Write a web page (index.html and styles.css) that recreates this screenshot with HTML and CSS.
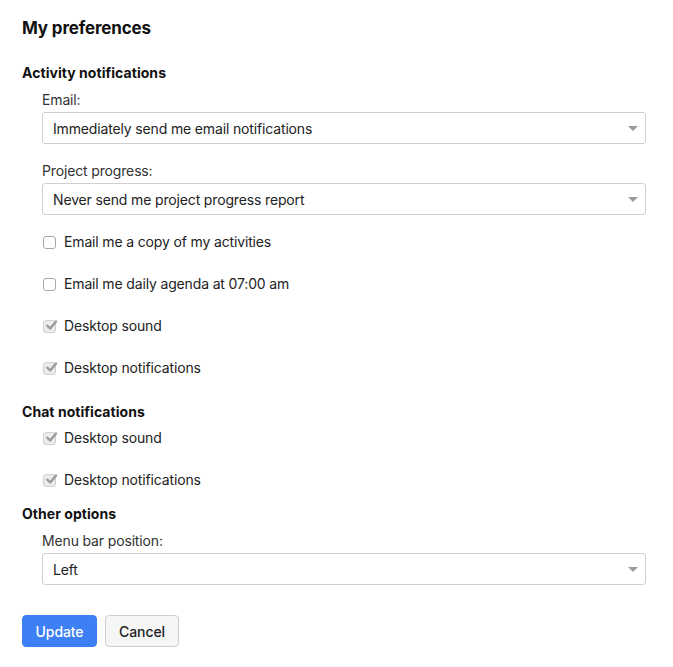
FILE: index.html
```html
<!DOCTYPE html>
<html>
<head>
<meta charset="utf-8">
<link rel="stylesheet" href="styles.css">
</head>
<body>
<div class="page">
  <h1 class="title">My preferences</h1>

  <h2 class="section">Activity notifications</h2>
  <div class="group">
    <div class="label">Email:</div>
    <div class="select"><span>Immediately send me email notifications</span><span class="arrow"></span></div>
    <div class="label label-next">Project progress:</div>
    <div class="select"><span>Never send me project progress report</span><span class="arrow"></span></div>
    <div class="checks first">
      <label class="check"><span class="box"></span>Email me a copy of my activities</label>
      <label class="check"><span class="box"></span>Email me daily agenda at 07:00 am</label>
      <label class="check"><span class="box checked"><svg viewBox="0 0 14 14"><path d="M3 7.2 L5.8 9.8 L11.2 3.2" fill="none" stroke="#9a9a9a" stroke-width="2.2" stroke-linecap="round" stroke-linejoin="round"/></svg></span>Desktop sound</label>
      <label class="check"><span class="box checked"><svg viewBox="0 0 14 14"><path d="M3 7.2 L5.8 9.8 L11.2 3.2" fill="none" stroke="#9a9a9a" stroke-width="2.2" stroke-linecap="round" stroke-linejoin="round"/></svg></span>Desktop notifications</label>
    </div>
  </div>

  <h2 class="section section-chat">Chat notifications</h2>
  <div class="group">
    <div class="checks">
      <label class="check"><span class="box checked"><svg viewBox="0 0 14 14"><path d="M3 7.2 L5.8 9.8 L11.2 3.2" fill="none" stroke="#9a9a9a" stroke-width="2.2" stroke-linecap="round" stroke-linejoin="round"/></svg></span>Desktop sound</label>
      <label class="check"><span class="box checked"><svg viewBox="0 0 14 14"><path d="M3 7.2 L5.8 9.8 L11.2 3.2" fill="none" stroke="#9a9a9a" stroke-width="2.2" stroke-linecap="round" stroke-linejoin="round"/></svg></span>Desktop notifications</label>
    </div>
  </div>

  <h2 class="section section-other">Other options</h2>
  <div class="group">
    <div class="label">Menu bar position:</div>
    <div class="select"><span>Left</span><span class="arrow"></span></div>
  </div>

  <div class="actions">
    <button class="btn btn-primary">Update</button>
    <button class="btn btn-default">Cancel</button>
  </div>
</div>
</body>
</html>
```

FILE: styles.css
```css
* { box-sizing: border-box; }
html, body { margin: 0; padding: 0; background: #fff; }
body {
  font-family: "Inter", "Liberation Sans", sans-serif;
  font-size: 14px;
  color: #222;
  letter-spacing: -0.15px;
}
.page {
  padding: 18px 27px 0 22px;
}
.title {
  margin: 0;
  font-size: 17px;
  line-height: 20px;
  font-weight: 700;
  color: #111;
  letter-spacing: -0.15px;
}
.section {
  margin: 25px 0 0;
  font-size: 14px;
  line-height: 20px;
  font-weight: 700;
  color: #111;
  letter-spacing: 0.05px;
}
.section-chat { margin-top: 24px; }
.section-other { margin-top: 14px; }
.group {
  padding-left: 20px;
}
.label {
  margin-top: 7px;
  line-height: 20px;
  color: #333;
}
.label-next { margin-top: 17px; }
.select {
  margin-top: 2px;
  height: 32px;
  border: 1px solid #cfcfcf;
  border-radius: 3px;
  display: flex;
  align-items: center;
  justify-content: space-between;
  padding: 0 7px 0 10px;
  color: #222;
}
.arrow {
  width: 0;
  height: 0;
  border-left: 5px solid transparent;
  border-right: 5px solid transparent;
  border-top: 5px solid #9b9b9b;
}
.checks {
  display: flex;
  flex-direction: column;
  gap: 22px;
  margin-top: 6px;
}
.checks.first { margin-top: 17px; }
.check {
  display: flex;
  align-items: center;
  gap: 8px;
  line-height: 20px;
  color: #222;
  padding-left: 1px;
}
.box {
  width: 13px;
  height: 13px;
  border: 1px solid #a8a8a8;
  border-radius: 3px;
  background: #fff;
  display: inline-flex;
  flex: none;
}
.box.checked {
  border-color: #d0d0d0;
  background: #ececec;
  position: relative;
}
.box.checked svg {
  position: absolute;
  left: 0;
  top: -3px;
  width: 15px;
  height: 15px;
}
.actions {
  display: flex;
  gap: 8px;
  margin-top: 30px;
}
.btn {
  height: 32px;
  border-radius: 4px;
  font-family: inherit;
  font-size: 14px;
  padding: 0;
  cursor: pointer;
  letter-spacing: -0.1px;
}
.btn-primary {
  width: 75px;
  background: #3d7ff5;
  border: 1px solid #3d7ff5;
  color: #fff;
  font-weight: 500;
}
.btn-default {
  width: 74px;
  background: #f6f6f6;
  border: 1px solid #cfcfcf;
  color: #222;
  font-weight: 500;
}
```
